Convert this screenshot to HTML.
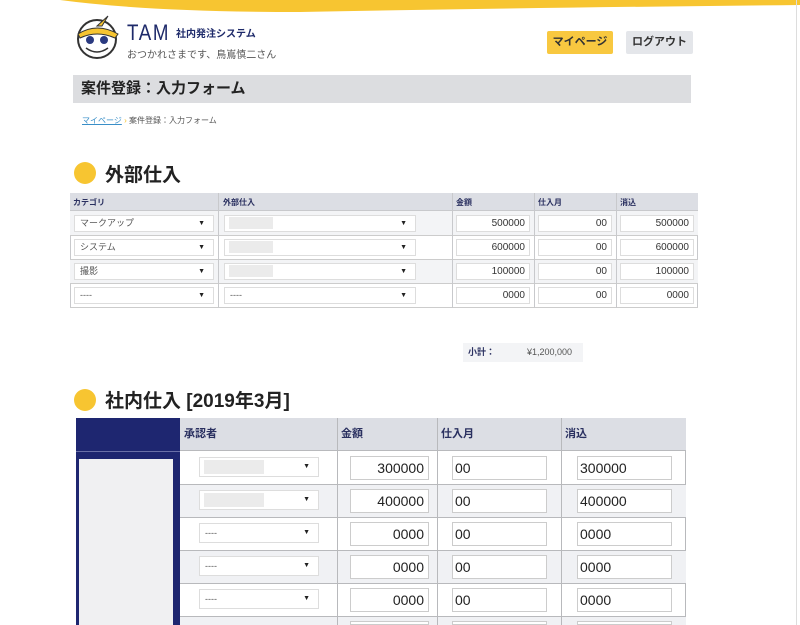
<!DOCTYPE html>
<html><head><meta charset="utf-8"><style>
*{box-sizing:border-box;margin:0;padding:0}
html,body{width:800px;height:625px;overflow:hidden}
body{background:#fff;font-family:"Liberation Sans","Noto Sans CJK JP",sans-serif;color:#333;position:relative}
.a{position:absolute}
.sel{position:absolute;background:#fff;border:1px solid #ddd;font-size:9px;color:#555;padding-left:5px;line-height:15px}
.sel:after{content:"▼";position:absolute;right:8px;font-size:7px;color:#222}
.inp{position:absolute;background:#fff;border:1px solid #ddd;font-size:10px;color:#333;text-align:right;padding-right:4px;line-height:15px}
.blur{position:absolute;background:#ebebeb;height:12px;top:1px;left:4px;width:44px}
.i2{position:absolute;background:#fff;border:1px solid #ccc;font-size:14px;color:#222;line-height:22px}
</style></head><body>
<svg class="a" style="left:0;top:0" width="800" height="16"><path d="M60 0 L800 0 L800 5 Q500 8 300 12 Q150 12 60 0Z" fill="#f7c531"/></svg>
<div class="a" style="left:796px;top:0;width:1px;height:625px;background:#ddd"></div>
<svg class="a" style="left:72px;top:12px" width="52" height="48"><circle cx="25" cy="27" r="19" fill="#fff" stroke="#333" stroke-width="2"/><path d="M6 22 Q25 10 46 22 L43 26 Q25 18 8 26Z" fill="#f7c531" stroke="#333"/><path d="M25 14 L36 4 L30 14Z" fill="#f7c531" stroke="#333"/><circle cx="18" cy="28" r="4" fill="#2a3a80"/><circle cx="32" cy="28" r="4" fill="#2a3a80"/><path d="M14 36 Q25 44 36 36" stroke="#333" fill="none" stroke-width="1.5"/></svg>
<div class="a" style="left:127px;top:20px;font-size:22px;color:#1e2a6a;letter-spacing:2px;transform:scaleX(0.85);transform-origin:left">TAM</div>
<div class="a" style="left:176px;top:25px;font-size:10px;color:#1e2a6a;font-weight:bold">社内発注システム</div>
<div class="a" style="left:127px;top:46px;font-size:10px;color:#555">おつかれさまです、鳥嶌慎二さん</div>
<div class="a" style="left:547px;top:31px;width:66px;height:23px;background:#f8c840;border-radius:2px;font-size:11px;color:#333;text-align:center;line-height:23px;font-weight:bold">マイページ</div>
<div class="a" style="left:626px;top:31px;width:67px;height:23px;background:#e4e6ea;border-radius:2px;font-size:11px;color:#333;text-align:center;line-height:23px;font-weight:bold">ログアウト</div>
<div class="a" style="left:73px;top:75px;width:618px;height:28px;background:#dcdde0;font-size:15px;font-weight:bold;line-height:28px;padding-left:8px;color:#222">案件登録：入力フォーム</div>
<div class="a" style="left:82px;top:115px;font-size:8px;color:#555"><span style="color:#3a8fc8;text-decoration:underline">マイページ</span> <span style="color:#f7c531">›</span> 案件登録：入力フォーム</div>
<div class="a" style="left:74px;top:162px;width:22px;height:22px;border-radius:50%;background:#f7c531"></div>
<div class="a" style="left:105px;top:160px;font-size:19px;font-weight:bold;color:#222">外部仕入</div>
<div class="a" style="left:70px;top:193px;width:628px;height:115px;border:1px solid #c8c9cc;background:#fff"></div>
<div class="a" style="left:70px;top:211px;width:628px;height:24px;background:#f3f4f6"></div>
<div class="a" style="left:70px;top:259px;width:628px;height:24px;background:#f3f4f6"></div>
<div class="a" style="left:70px;top:193px;width:628px;height:18px;background:#dcdee4;border-bottom:1px solid #c8c9cc;font-size:8px;font-weight:bold;color:#2a3060">
<span class="a" style="left:3px;top:4px">カテゴリ</span><span class="a" style="left:153px;top:4px">外部仕入</span><span class="a" style="left:386px;top:4px">金額</span><span class="a" style="left:468px;top:4px">仕入月</span><span class="a" style="left:550px;top:4px">消込</span></div>
<div class="a" style="left:70px;top:235px;width:628px;height:1px;background:#ccc"></div>
<div class="a" style="left:70px;top:259px;width:628px;height:1px;background:#ccc"></div>
<div class="a" style="left:70px;top:283px;width:628px;height:1px;background:#ccc"></div>
<div class="a" style="left:70px;top:307px;width:628px;height:1px;background:#ccc"></div>
<div class="a" style="left:218px;top:193px;width:1px;height:115px;background:#c8c9cc"></div>
<div class="a" style="left:452px;top:193px;width:1px;height:115px;background:#c8c9cc"></div>
<div class="a" style="left:534px;top:193px;width:1px;height:115px;background:#c8c9cc"></div>
<div class="a" style="left:616px;top:193px;width:1px;height:115px;background:#c8c9cc"></div>
<div class="sel" style="left:74px;top:215px;width:140px;height:17px">マークアップ</div>
<div class="sel" style="left:74px;top:239px;width:140px;height:17px">システム</div>
<div class="sel" style="left:74px;top:263px;width:140px;height:17px">撮影</div>
<div class="sel" style="left:74px;top:287px;width:140px;height:17px">----</div>
<div class="sel" style="left:224px;top:215px;width:192px;height:17px"><i class="blur"></i></div>
<div class="sel" style="left:224px;top:239px;width:192px;height:17px"><i class="blur"></i></div>
<div class="sel" style="left:224px;top:263px;width:192px;height:17px"><i class="blur"></i></div>
<div class="sel" style="left:224px;top:287px;width:192px;height:17px">----</div>
<div class="inp" style="left:456px;top:215px;width:74px;height:17px">500000</div>
<div class="inp" style="left:456px;top:239px;width:74px;height:17px">600000</div>
<div class="inp" style="left:456px;top:263px;width:74px;height:17px">100000</div>
<div class="inp" style="left:456px;top:287px;width:74px;height:17px">0000</div>
<div class="inp" style="left:538px;top:215px;width:74px;height:17px">00</div>
<div class="inp" style="left:538px;top:239px;width:74px;height:17px">00</div>
<div class="inp" style="left:538px;top:263px;width:74px;height:17px">00</div>
<div class="inp" style="left:538px;top:287px;width:74px;height:17px">00</div>
<div class="inp" style="left:620px;top:215px;width:74px;height:17px">500000</div>
<div class="inp" style="left:620px;top:239px;width:74px;height:17px">600000</div>
<div class="inp" style="left:620px;top:263px;width:74px;height:17px">100000</div>
<div class="inp" style="left:620px;top:287px;width:74px;height:17px">0000</div>
<div class="a" style="left:463px;top:343px;width:120px;height:19px;background:#f3f4f6;font-size:9px;line-height:19px"><b style="position:absolute;left:5px;color:#2a3060">小計：</b><span style="position:absolute;left:64px;color:#555">¥1,200,000</span></div>
<div class="a" style="left:74px;top:389px;width:22px;height:22px;border-radius:50%;background:#f7c531"></div>
<div class="a" style="left:105px;top:386px;font-size:19px;font-weight:bold;color:#222">社内仕入 [2019年3月]</div>
<div class="a" style="left:76px;top:418px;width:610px;height:210px;background:#fff;border:1px solid #b8b9bc"></div>
<div class="a" style="left:180px;top:418px;width:506px;height:33px;background:#dcdee4;border-bottom:1px solid #b8b9bc;font-size:11px;font-weight:bold;color:#2a3060;line-height:33px">
<span class="a" style="left:4px">承認者</span><span class="a" style="left:161px">金額</span><span class="a" style="left:261px">仕入月</span><span class="a" style="left:385px">消込</span></div>
<div class="a" style="left:180px;top:484px;width:506px;height:33px;background:#f0f1f4"></div>
<div class="a" style="left:180px;top:550px;width:506px;height:33px;background:#f0f1f4"></div>
<div class="a" style="left:180px;top:616px;width:506px;height:12px;background:#f0f1f4"></div>
<div class="a" style="left:180px;top:484px;width:506px;height:1px;background:#b8b9bc"></div>
<div class="a" style="left:180px;top:517px;width:506px;height:1px;background:#b8b9bc"></div>
<div class="a" style="left:180px;top:550px;width:506px;height:1px;background:#b8b9bc"></div>
<div class="a" style="left:180px;top:583px;width:506px;height:1px;background:#b8b9bc"></div>
<div class="a" style="left:180px;top:616px;width:506px;height:1px;background:#b8b9bc"></div>
<div class="a" style="left:337px;top:418px;width:1px;height:210px;background:#b8b9bc"></div>
<div class="a" style="left:437px;top:418px;width:1px;height:210px;background:#b8b9bc"></div>
<div class="a" style="left:561px;top:418px;width:1px;height:210px;background:#b8b9bc"></div>
<div class="a" style="left:76px;top:418px;width:104px;height:210px;background:#1e2670"></div>
<div class="a" style="left:76px;top:451px;width:104px;height:1px;background:#6a70a8"></div>
<div class="a" style="left:79px;top:459px;width:94px;height:170px;background:#f0f0f2"></div>
<div class="sel" style="left:199px;top:457px;width:120px;height:20px;line-height:18px"><i class="blur" style="width:60px;top:2px;height:14px"></i></div>
<div class="sel" style="left:199px;top:490px;width:120px;height:20px;line-height:18px"><i class="blur" style="width:60px;top:2px;height:14px"></i></div>
<div class="sel" style="left:199px;top:523px;width:120px;height:20px;line-height:18px">----</div>
<div class="sel" style="left:199px;top:556px;width:120px;height:20px;line-height:18px">----</div>
<div class="sel" style="left:199px;top:589px;width:120px;height:20px;line-height:18px">----</div>
<div class="i2" style="left:350px;top:456px;width:79px;height:24px;text-align:right;padding-right:4px">300000</div>
<div class="i2" style="left:350px;top:489px;width:79px;height:24px;text-align:right;padding-right:4px">400000</div>
<div class="i2" style="left:350px;top:522px;width:79px;height:24px;text-align:right;padding-right:4px">0000</div>
<div class="i2" style="left:350px;top:555px;width:79px;height:24px;text-align:right;padding-right:4px">0000</div>
<div class="i2" style="left:350px;top:588px;width:79px;height:24px;text-align:right;padding-right:4px">0000</div>
<div class="i2" style="left:350px;top:621px;width:79px;height:4px"></div>
<div class="i2" style="left:452px;top:456px;width:95px;height:24px;padding-left:2px">00</div>
<div class="i2" style="left:452px;top:489px;width:95px;height:24px;padding-left:2px">00</div>
<div class="i2" style="left:452px;top:522px;width:95px;height:24px;padding-left:2px">00</div>
<div class="i2" style="left:452px;top:555px;width:95px;height:24px;padding-left:2px">00</div>
<div class="i2" style="left:452px;top:588px;width:95px;height:24px;padding-left:2px">00</div>
<div class="i2" style="left:452px;top:621px;width:95px;height:4px"></div>
<div class="i2" style="left:577px;top:456px;width:95px;height:24px;padding-left:2px">300000</div>
<div class="i2" style="left:577px;top:489px;width:95px;height:24px;padding-left:2px">400000</div>
<div class="i2" style="left:577px;top:522px;width:95px;height:24px;padding-left:2px">0000</div>
<div class="i2" style="left:577px;top:555px;width:95px;height:24px;padding-left:2px">0000</div>
<div class="i2" style="left:577px;top:588px;width:95px;height:24px;padding-left:2px">0000</div>
<div class="i2" style="left:577px;top:621px;width:95px;height:4px"></div>
</body></html>
